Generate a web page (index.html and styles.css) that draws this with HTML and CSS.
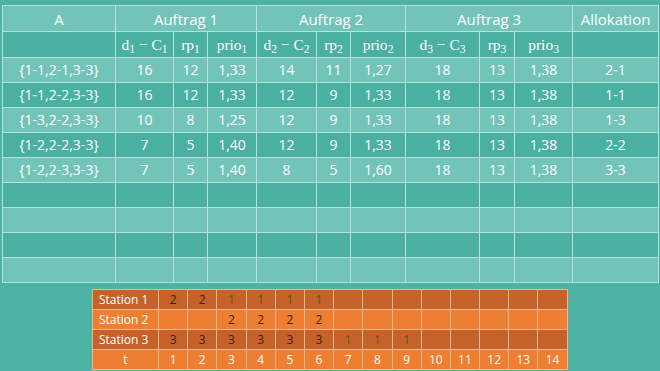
FILE: index.html
```html
<!DOCTYPE html>
<html>
<head>
<meta charset="utf-8">
<link rel="stylesheet" href="styles.css">
</head>
<body>
<div class="page">
<table class="main">
<colgroup>
<col class="c-a"><col class="c1"><col class="c2"><col class="c3"><col class="c4"><col class="c5"><col class="c6"><col class="c7"><col class="c8"><col class="c9"><col class="c10">
</colgroup>
<tr class="h1 light">
<td>A</td><td colspan="3">Auftrag 1</td><td colspan="3">Auftrag 2</td><td colspan="3">Auftrag 3</td><td>Allokation</td>
</tr>
<tr class="h2 dark">
<td></td>
<td class="m">d<sub>1</sub> − C<sub>1</sub></td><td class="m">rp<sub>1</sub></td><td class="m">prio<sub>1</sub></td>
<td class="m">d<sub>2</sub> − C<sub>2</sub></td><td class="m">rp<sub>2</sub></td><td class="m">prio<sub>2</sub></td>
<td class="m">d<sub>3</sub> − C<sub>3</sub></td><td class="m">rp<sub>3</sub></td><td class="m">prio<sub>3</sub></td>
<td></td>
</tr>
<tr class="light"><td>{1-1,2-1,3-3}</td><td>16</td><td>12</td><td>1,33</td><td>14</td><td>11</td><td>1,27</td><td>18</td><td>13</td><td>1,38</td><td>2-1</td></tr>
<tr class="dark"><td>{1-1,2-2,3-3}</td><td>16</td><td>12</td><td>1,33</td><td>12</td><td>9</td><td>1,33</td><td>18</td><td>13</td><td>1,38</td><td>1-1</td></tr>
<tr class="light"><td>{1-3,2-2,3-3}</td><td>10</td><td>8</td><td>1,25</td><td>12</td><td>9</td><td>1,33</td><td>18</td><td>13</td><td>1,38</td><td>1-3</td></tr>
<tr class="dark"><td>{1-2,2-2,3-3}</td><td>7</td><td>5</td><td>1,40</td><td>12</td><td>9</td><td>1,33</td><td>18</td><td>13</td><td>1,38</td><td>2-2</td></tr>
<tr class="light"><td>{1-2,2-3,3-3}</td><td>7</td><td>5</td><td>1,40</td><td>8</td><td>5</td><td>1,60</td><td>18</td><td>13</td><td>1,38</td><td>3-3</td></tr>
<tr class="dark"><td></td><td></td><td></td><td></td><td></td><td></td><td></td><td></td><td></td><td></td><td></td></tr>
<tr class="light"><td></td><td></td><td></td><td></td><td></td><td></td><td></td><td></td><td></td><td></td><td></td></tr>
<tr class="dark"><td></td><td></td><td></td><td></td><td></td><td></td><td></td><td></td><td></td><td></td><td></td></tr>
<tr class="light"><td></td><td></td><td></td><td></td><td></td><td></td><td></td><td></td><td></td><td></td><td></td></tr>
</table>

<table class="gantt">
<colgroup><col class="g-first"><col span="14" class="g-cell"></colgroup>
<tr class="o-dark"><td class="lbl">Station 1</td><td>2</td><td>2</td><td class="g">1</td><td class="g">1</td><td class="g">1</td><td class="g">1</td><td></td><td></td><td></td><td></td><td></td><td></td><td></td><td></td></tr>
<tr class="o-light"><td class="lbl">Station 2</td><td></td><td></td><td>2</td><td>2</td><td>2</td><td>2</td><td></td><td></td><td></td><td></td><td></td><td></td><td></td><td></td></tr>
<tr class="o-dark"><td class="lbl">Station 3</td><td>3</td><td>3</td><td>3</td><td>3</td><td>3</td><td>3</td><td class="g">1</td><td class="g">1</td><td class="g">1</td><td></td><td></td><td></td><td></td><td></td></tr>
<tr class="o-light t"><td class="lbl c">t</td><td>1</td><td>2</td><td>3</td><td>4</td><td>5</td><td>6</td><td>7</td><td>8</td><td>9</td><td>10</td><td>11</td><td>12</td><td>13</td><td>14</td></tr>
</table>
</div>
</body>
</html>
```
FILE: styles.css
```css
html, body {
  margin: 0;
  padding: 0;
  background: #4db3a5;
  width: 660px;
  height: 371px;
  overflow: hidden;
}
.page {
  padding: 5px 0 0 2px;
  font-family: "Open Sans", "Noto Sans", sans-serif;
}
.main {
  border-collapse: collapse;
  table-layout: fixed;
  width: 656px;
  color: #ffffff;
  font-size: 14px;
}
.c-a { width: 113px; }
.c1 { width: 58px; }
.c2 { width: 34px; }
.c3 { width: 49px; }
.c4 { width: 60px; }
.c5 { width: 34px; }
.c6 { width: 55px; }
.c7 { width: 74px; }
.c8 { width: 35px; }
.c9 { width: 58px; }
.c10 { width: 86px; }
.main td {
  border: 1px solid #b4e3da;
  text-align: center;
  padding: 0;
  height: 24px;
  line-height: 20px;
  white-space: nowrap;
  overflow: hidden;
}
.main tr.h1 td, .main tr.h2 td { height: 25px; }
.main tr.h1 td { font-size: 15px; }
.light td { background: #72c4b8; }
.dark td { background: #4ab0a2; }
.main td.m {
  font-family: "Liberation Serif", "DejaVu Serif", serif;
  font-size: 15.5px;
}
.main td.m sub {
  font-size: 11.5px;
  line-height: 0;
  vertical-align: -3px;
}
.gantt {
  border-collapse: collapse;
  table-layout: fixed;
  width: 475px;
  margin: 6px 0 0 90px;
  font-size: 12px;
  color: #3b2414;
}
.g-first { width: 66px; }
.g-cell { width: 29.2px; }
.gantt td {
  border: 1px solid #f2b68a;
  height: 19px;
  padding: 0;
  text-align: center;
  line-height: 17px;
  overflow: hidden;
  white-space: nowrap;
}
.o-dark td { background: #c5622a; }
.o-light td { background: #ee7f32; }
.gantt td.lbl {
  color: #ffffff;
  text-align: left;
  padding-left: 6px;
  font-size: 12px;
}
.gantt td.lbl.c { text-align: center; padding-left: 0; }
.gantt td.g { color: #5e5a14; }
.gantt tr.t td { color: #ffffff; }
```
